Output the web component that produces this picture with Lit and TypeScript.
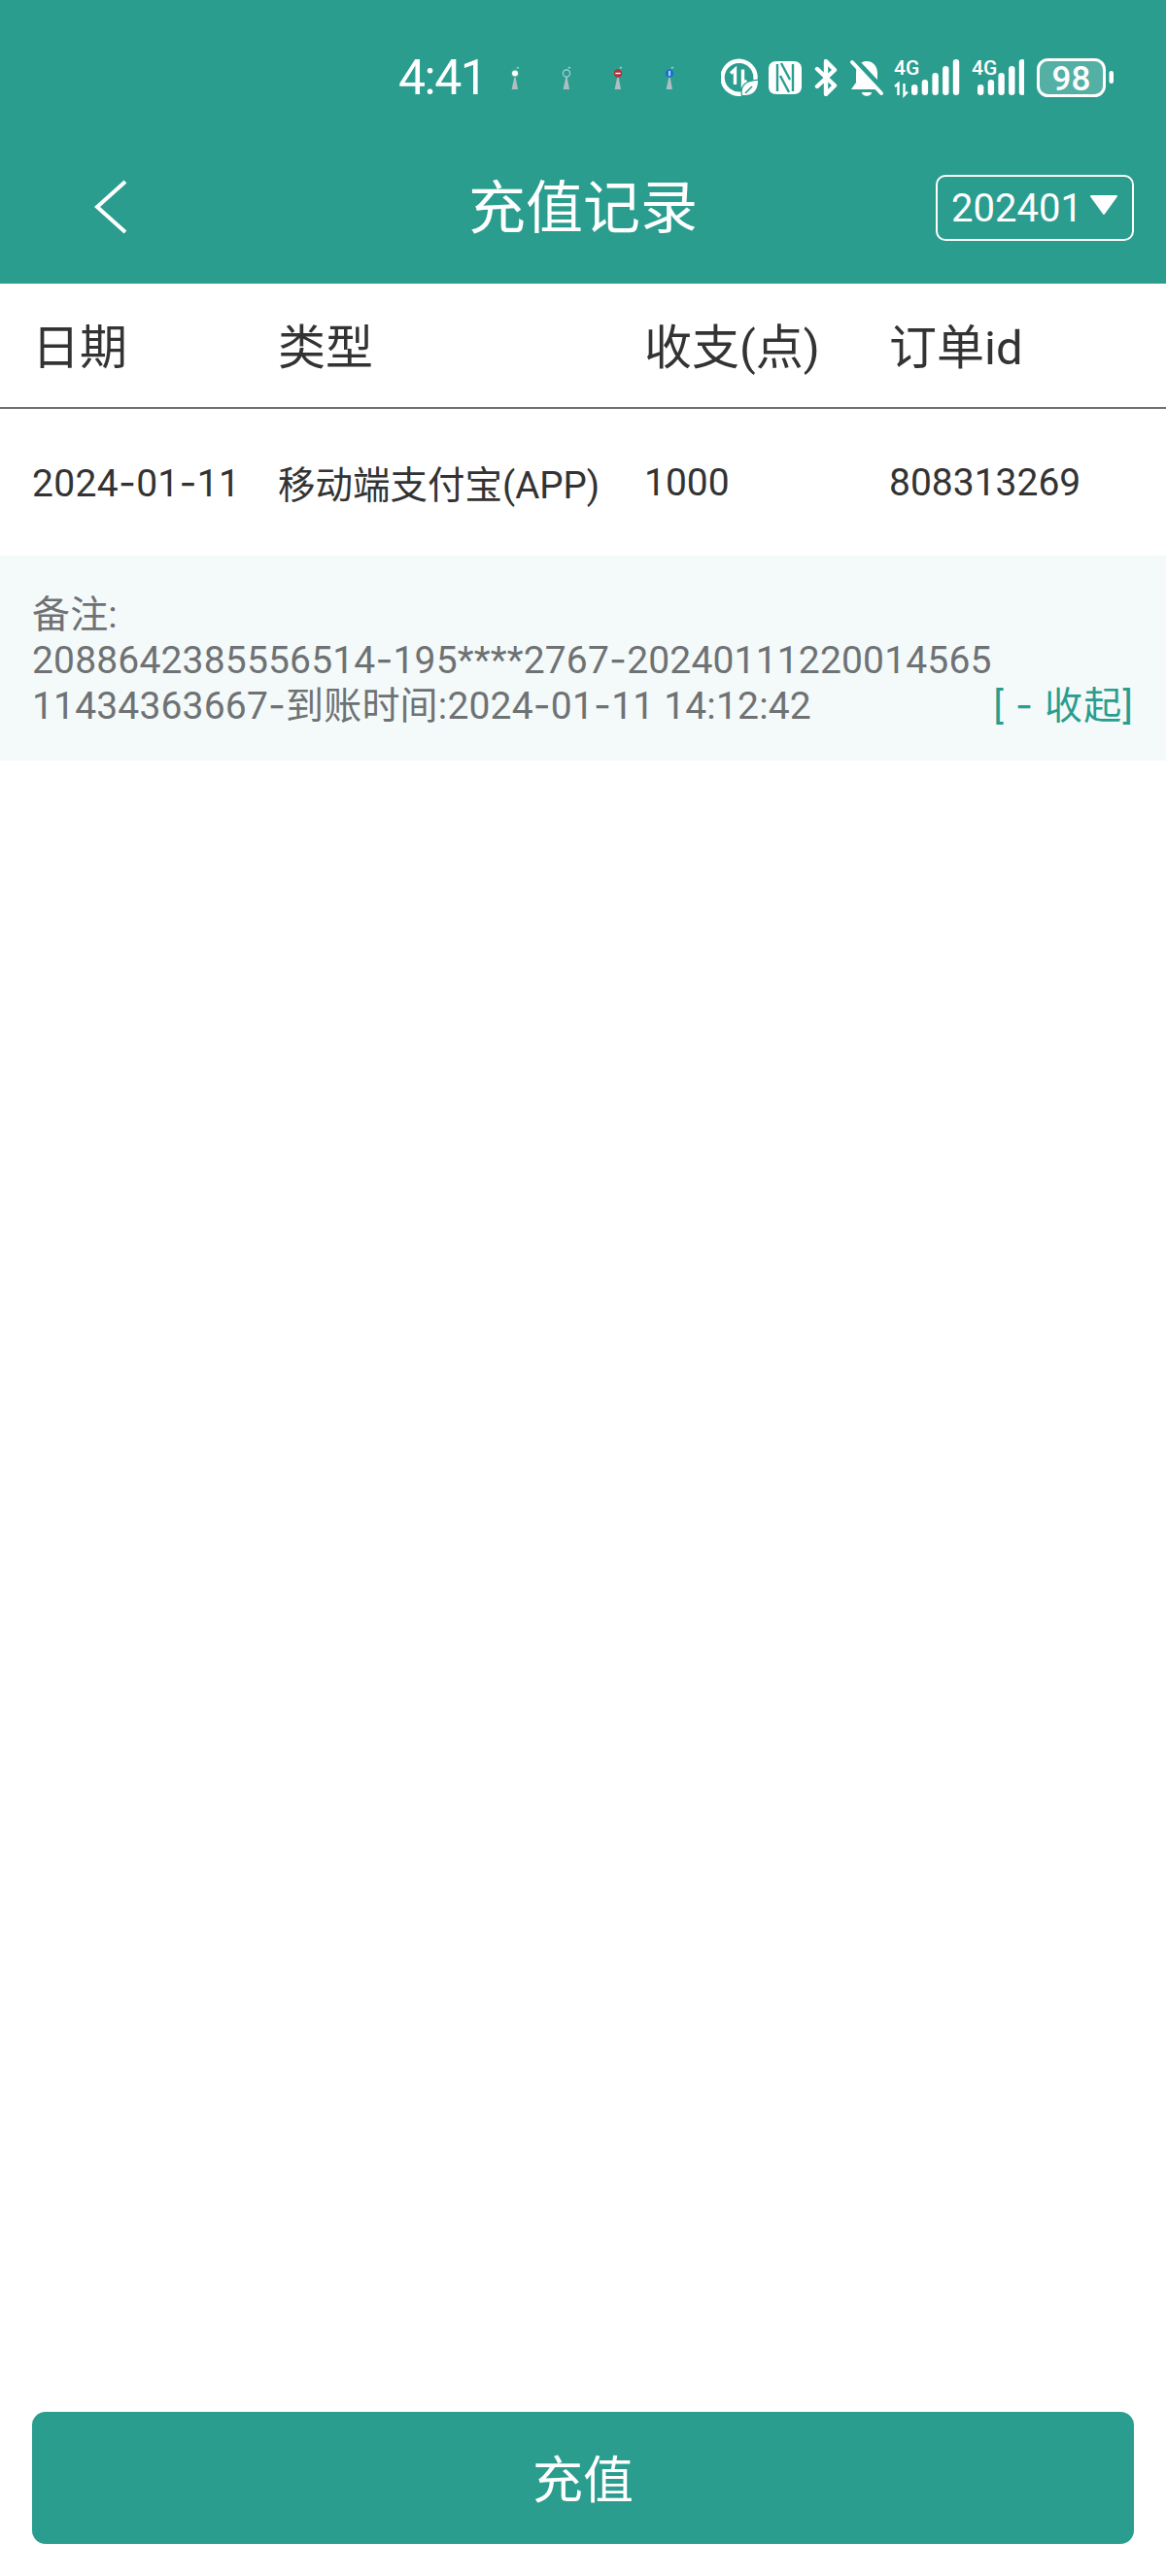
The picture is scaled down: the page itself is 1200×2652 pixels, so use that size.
import { LitElement, html, css, svg } from "lit";
import { customElement } from "lit/decorators.js";

const tower = (color: string, fill: string, mark: string) => html`<svg class="tower" width="12" height="26" viewBox="0 0 12 26">
  <path d="M7 3.5 L9 1.4 L10.6 3.2 Z" fill="#8fe6cf"></path>
  <path d="M5.4 12 L2.6 25 H9 L6.6 12 Z" fill="#aebfc4"></path>
  <circle cx="6" cy="8.5" r="3.6" fill="${fill}" stroke="${color}" stroke-width="1.2"></circle>
  <path d="${mark}" stroke="#fff" stroke-width="1.4" fill="none"></path>
</svg>`;

const bars = (heights: number[]) =>
  heights.map((h, i) => svg`<rect x="${i * 10.7}" y="${37 - h}" width="6.4" height="${h}" rx="3.2" fill="#fff"></rect>`);

const hy = (text: string) => {
  const parts = text.split("-");
  return parts.map((p, i) => (i === 0 ? p : html`<span class="hy">-</span>${p}`));
};

@customElement("app-root")
export class AppRoot extends LitElement {
  static styles = css`
    :host {
      display: flex;
      flex-direction: column;
      min-height: 2652px;
      background: #fff;
      font-family: Roboto, "Noto Sans CJK SC", sans-serif;
      color: #333;
    }
    .head { background: #2a9d8f; height: 292px; display: flex; flex-direction: column; }
    .status { height: 160px; flex: none; padding-left: 410px; display: flex; align-items: center; box-sizing: border-box; }
    .time { font-size: 50px; color: #fff; font-weight: 400; width: 114px; letter-spacing: -1.5px; line-height: 1; flex: none; }
    .towers { display: flex; gap: 41px; width: 218px; flex: none; }
    .tower { display: block; flex: none; }
    .icons { display: flex; align-items: center; }
    .icons svg { display: block; flex: none; }
    .i-nfc { margin-left: 11px; }
    .i-bt { margin-left: 13px; }
    .i-bell { margin-left: 12px; }
    .i-sig1 { margin-left: 10px; }
    .i-sig2 { margin-left: 12px; }
    .i-batt { margin-left: 13px; }
    .nav { flex: none; margin-top: 20px; padding: 0 33px; display: grid; grid-template-columns: 1fr auto 1fr; align-items: center; }
    .back { margin-left: 64px; margin-top: -2px; display: block; }
    .title { font-size: 59px; color: #fff; line-height: 67px; }
    .select {
      justify-self: end;
      box-sizing: border-box;
      width: 204px;
      height: 68px;
      border: 2px solid #fff;
      border-radius: 10px;
      color: #fff;
      font-size: 40px;
      display: flex;
      align-items: center;
      padding-left: 14px;
      gap: 7px;
    }
    .select svg { display: block; margin-top: -6px; }
    .row {
      display: grid;
      grid-template-columns: 253px 377px 252px 1fr;
      padding-left: 33px;
      align-items: center;
    }
    .th { height: 127px; font-size: 49px; border-bottom: 2px solid #707070; }
    .th div { margin-top: -5px; }
    .td { height: 151px; font-size: 39px; }
    .td div { margin-top: 1px; }
    .td .date { letter-spacing: .3px; }
    .td .kind { font-size: 38.5px; margin-top: -2px; }
    .hy { font-family: Inter, sans-serif; }
    .note {
      background: #f4fafa;
      height: 211px;
      box-sizing: border-box;
      padding: 40px 33px 33px;
      font-size: 39px;
      line-height: 46px;
      letter-spacing: .17px;
      color: #6f7274;
      display: flex;
      justify-content: space-between;
      align-items: flex-end;
    }
    .more { color: #2a9d8f; white-space: pre; letter-spacing: 1.2px; }
    .spacer { flex: 1; }
    .btn {
      margin: 0 33px 33px;
      height: 136px;
      box-sizing: border-box;
      padding-bottom: 4px;
      background: #2a9d8f;
      border-radius: 14px;
      color: #fff;
      font-size: 52px;
      display: flex;
      align-items: center;
      justify-content: center;
    }
    .g4 { font-size: 21px; font-weight: 500; fill: #fff; }
    .batt { font-size: 35px; font-weight: 500; fill: #fff; }
  `;

  render() {
    return html`
      <div class="head">
        <div class="status">
          <div class="time">4:41</div>
          <div class="towers">
            ${tower("#3fa98a", "#fff", "M4 8.5 H8")}${tower("#a8d5dc", "none", "")}${tower("#b5303a", "#b5303a", "M3.4 8.5 H8.6")}${tower("#1f6fd0", "#1f6fd0", "M6 6 V11")}
          </div>
          <div class="icons">
            <svg width="38" height="40" viewBox="0 0 38 40">
              <path d="M21 36.6 A17 17 0 1 1 35.5 21" fill="none" stroke="#fff" stroke-width="4.4" stroke-linecap="round"></path>
              <path d="M10 15.5 L14.5 11.5 V27 M22.5 11.5 V27 L26.5 23" fill="none" stroke="#fff" stroke-width="3.4"></path>
              <path d="M22 38 C20 28 27 23 38 23 C38 33 33 39 22 38 Z" fill="#fff" stroke="#2a9d8f" stroke-width="2.4" paint-order="stroke"></path>
              <path d="M25 36 L32 29" stroke="#2a9d8f" stroke-width="1.6"></path>
            </svg>
            <svg class="i-nfc" width="34" height="34" viewBox="0 0 34 34">
              <path d="M8 0 H26 C31 0 34 3 34 8 V26 C34 31 31 34 26 34 H8 C3 34 0 31 0 26 V8 C0 3 3 0 8 0 Z" fill="#fff"></path>
              <path d="M9 3 V31 M25 3 V31 M13 2 L22 19 M12 15 L21 32" stroke="#2a9d8f" stroke-width="2.4" fill="none"></path>
            </svg>
            <svg class="i-bt" width="24" height="38" viewBox="0 0 24 38">
              <path d="M3 10 L21 27 L12 36 V2 L21 11 L3 28" fill="none" stroke="#fff" stroke-width="4.4" stroke-linejoin="round" stroke-linecap="round"></path>
            </svg>
            <svg class="i-bell" width="36" height="38" viewBox="0 0 36 38">
              <path d="M18 2 C25 2 29 8 29 14 V24 L34 31 H2 L7 24 V14 C7 8 11 2 18 2 Z" fill="#fff"></path>
              <path d="M13 34 H23 C23 39 13 39 13 34 Z" fill="#fff"></path>
              <path d="M5 0 L36 33" stroke="#2a9d8f" stroke-width="6"></path>
              <path d="M3 3 L33 35" stroke="#fff" stroke-width="4" stroke-linecap="round"></path>
            </svg>
            <svg class="i-sig1" width="68" height="50" viewBox="0 -6 68 50">
              <text class="g4" x="0" y="16">4G</text>
              <path d="M1 28 L4.5 25 V37 M10.5 25 V37 L14 33.5" stroke="#fff" stroke-width="2.4" fill="none"></path>
              <g transform="translate(18 0)">${bars([11, 16, 23, 30, 37])}</g>
            </svg>
            <svg class="i-sig2" width="54" height="50" viewBox="0 -6 54 50">
              <text class="g4" x="0" y="16">4G</text>
              <g transform="translate(6 0)">${bars([11, 16, 23, 30, 37])}</g>
            </svg>
            <svg class="i-batt" width="80" height="40" viewBox="0 0 80 40">
              <rect x="1.5" y="1.5" width="68" height="37" rx="10" fill="#fff" fill-opacity=".2" stroke="#fff" stroke-width="3"></rect>
              <text class="batt" x="35.5" y="32.5" text-anchor="middle">98</text>
              <rect x="74.5" y="13" width="4.5" height="13" rx="2.2" fill="#fff"></rect>
            </svg>
          </div>
        </div>
        <div class="nav">
          <svg class="back" width="36" height="56" viewBox="0 0 36 56">
            <path d="M32 2 L3 28 L32 54" fill="none" stroke="#fff" stroke-width="4"></path>
          </svg>
          <div class="title">充值记录</div>
          <div class="select">
            <span>202401</span>
            <svg width="30" height="22" viewBox="0 0 30 22"><path d="M2 2 H28 L15 20 Z" fill="#fff" stroke="#fff" stroke-width="2" stroke-linejoin="round"></path></svg>
          </div>
        </div>
      </div>
      <div class="row th"><div>日期</div><div>类型</div><div>收支(点)</div><div>订单id</div></div>
      <div class="row td"><div class="date">${hy("2024-01-11")}</div><div class="kind">移动端支付宝(APP)</div><div>1000</div><div>808313269</div></div>
      <div class="note">
        <div>
          <div>备注:</div>
          <div>${hy("2088642385556514-195****2767-20240111220014565")}</div>
          <div>${hy("11434363667-到账时间:2024-01-11 14:12:42")}</div>
        </div>
        <div class="more">[ <span class="hy">-</span> 收起]</div>
      </div>
      <div class="spacer"></div>
      <div class="btn">充值</div>
    `;
  }
}
